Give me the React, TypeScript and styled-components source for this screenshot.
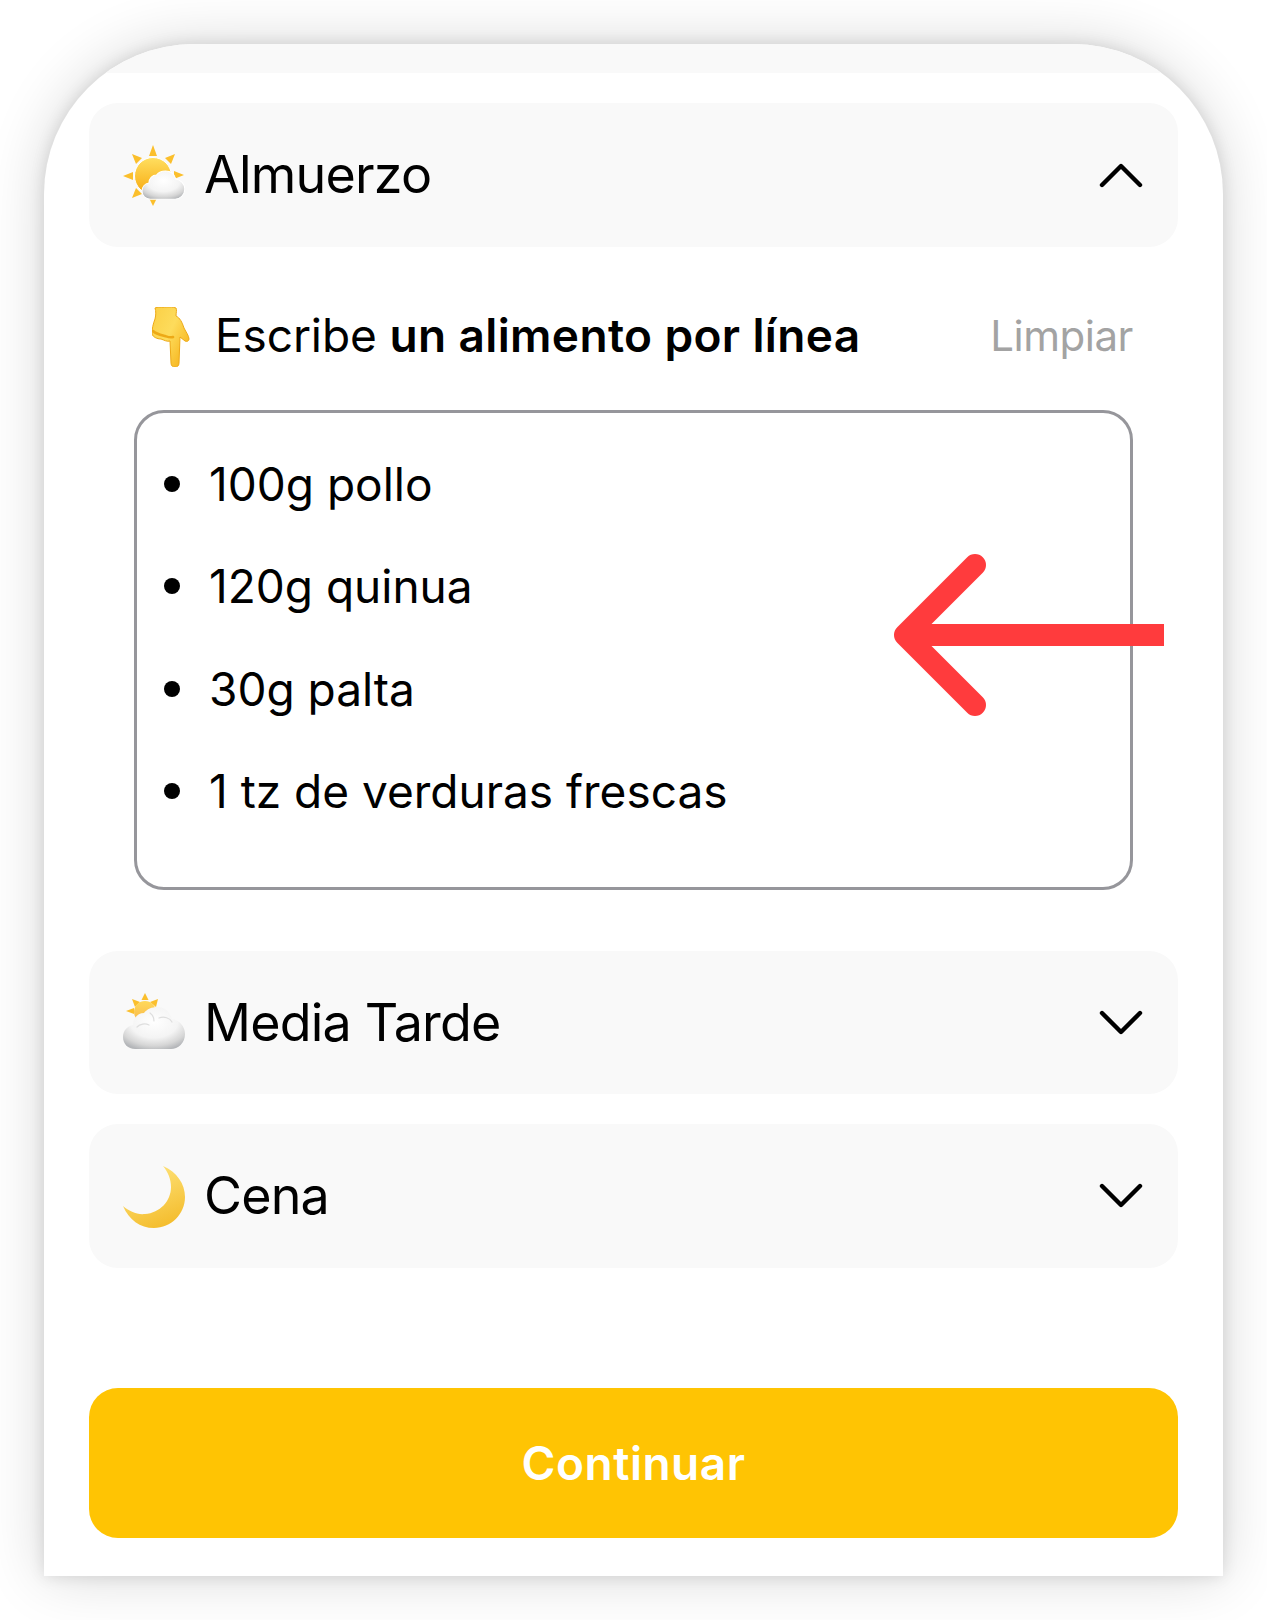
import React from 'react';
import styled, { createGlobalStyle } from 'styled-components';

const GlobalStyle = createGlobalStyle`
  html, body {
    margin: 0;
    padding: 0;
    background: #fff;
  }
  body {
    font-family: Inter, "Liberation Sans", sans-serif;
    color: #000;
  }
`;

const Page = styled.div`
  box-sizing: border-box;
  height: 1620px;
  padding: 44px 44px 44px;
  overflow: hidden;
`;

const Phone = styled.div`
  position: relative;
  box-sizing: border-box;
  width: 1179px;
  height: 1532px;
  background: #fff;
  border-radius: 150px 150px 0 0;
  box-shadow: 0 0 60px rgba(0, 0, 0, 0.16), 0 0 16px rgba(0, 0, 0, 0.12);
  overflow: hidden;
  display: flex;
  flex-direction: column;
`;

const TopStrip = styled.div`
  height: 29px;
  flex: none;
  background: #f9f9f9;
`;

const Content = styled.div`
  flex: 1;
  display: flex;
  flex-direction: column;
  padding: 30px 45px 38px;
`;

const MealRow = styled.div<{ $gapAfter?: number }>`
  box-sizing: border-box;
  height: 143.7px;
  flex: none;
  display: flex;
  align-items: center;
  gap: 19px;
  padding: 0 34px;
  border-radius: 29px;
  background: #f9f9f9;
  margin-bottom: ${(p) => p.$gapAfter ?? 0}px;
`;

const MealName = styled.span`
  flex: 1;
  font-size: 52px;
  font-weight: 400;
  letter-spacing: -0.8px;
  line-height: 60px;
`;

const Emoji = styled.svg`
  display: block;
  flex: none;
  width: 62px;
  height: 62px;
  margin-top: 3px;
`;

const Chevron = styled.svg`
  display: block;
  flex: none;
  width: 44px;
  height: 28px;
  margin-right: 1px;
  fill: none;
  stroke: #000;
  stroke-width: 4.4;
  stroke-linecap: round;
  stroke-linejoin: round;
`;

const Panel = styled.div`
  display: flex;
  flex-direction: column;
  padding: 56.5px 45px 61px 45px;
`;

const HintRow = styled.div`
  display: flex;
  align-items: center;
  padding-left: 18px;
  height: 64px;
`;

const HandIcon = styled.svg`
  display: block;
  flex: none;
  width: 38px;
  height: 60px;
  margin-top: 3px;
  margin-right: 25px;
`;

const HintText = styled.span`
  flex: 1;
  font-size: 46px;
  letter-spacing: -0.1px;
  font-weight: 400;

  b {
    font-weight: 600;
    letter-spacing: 0.36px;
  }
`;

const ClearLink = styled.span`
  font-size: 42px;
  color: #a3a3a3;
  letter-spacing: -0.45px;
`;

const FoodBox = styled.div`
  box-sizing: border-box;
  width: 999px;
  height: 480px;
  margin-top: 42.5px;
  border: 3px solid #96969b;
  border-radius: 30px;
  padding: 20px 27px 0;
  display: flex;
  flex-direction: column;
`;

const FoodItem = styled.div`
  height: 102.4px;
  flex: none;
  display: flex;
  align-items: center;
  font-size: 46px;
  letter-spacing: 0;
`;

const Bullet = styled.span`
  flex: none;
  width: 16px;
  height: 16px;
  border-radius: 50%;
  background: #000;
  margin-right: 29px;
`;

const Spacer = styled.div`
  flex: 1;
`;

const ContinueButton = styled.button`
  height: 150px;
  border: 0;
  border-radius: 29px;
  background: #ffc403;
  color: #fff;
  font-family: inherit;
  font-size: 46px;
  font-weight: 600;
  letter-spacing: 0.5px;
`;

const Arrow = styled.svg`
  position: absolute;
  left: 836px;
  top: 508px;
  width: 300px;
  height: 170px;
  fill: none;
  stroke: #ff3b3d;
  stroke-width: 22;
  stroke-linejoin: round;
  stroke-linecap: round;
`;

const cloudPath =
  'M12 42C5 42 0 37 0 30 0 24 4 19 10 18 10 11 15 6 21 6 24 2 29 0 34 0 42 0 47 5 49 12 56 13 62 19 62 27 62 36 55 42 48 42z';

const CloudDefs = ({ id }: { id: string }) => (
  <radialGradient id={id} cx="0.5" cy="0.35" r="0.7">
    <stop offset="0" stopColor="#ffffff" />
    <stop offset="0.55" stopColor="#f4f4f4" />
    <stop offset="0.82" stopColor="#d6d6d6" />
    <stop offset="1" stopColor="#b4b6b9" />
  </radialGradient>
);

const SunBehindCloud = () => (
  <Emoji viewBox="0 0 62 62">
    <defs>
      <linearGradient id="sun-a" x1="0" y1="0" x2="0" y2="1">
        <stop offset="0" stopColor="#ffdf60" />
        <stop offset="1" stopColor="#f7a90f" />
      </linearGradient>
      <CloudDefs id="cloud-a" />
    </defs>
    <g fill="#fbbf2c">
      <path d="M30 0l4 11h-8z" />
      <path d="M30 61l-4-8h8z" />
      <path d="M9 9l10 4-6 6z" />
      <path d="M52 9l-10 4 6 6z" />
      <path d="M0 31l10-4v8z" />
      <path d="M61 30l-10-4v8z" />
      <path d="M9 53l4-10 6 6z" />
    </g>
    <circle cx="30" cy="31" r="18.5" fill="url(#sun-a)" stroke="#fff" strokeWidth="1" />
    <path
      d={cloudPath}
      transform="translate(19 26) scale(0.69 0.67)"
      fill="url(#cloud-a)"
      stroke="#fff"
      strokeWidth="1.5"
    />
  </Emoji>
);

const CloudWithSun = () => (
  <Emoji viewBox="0 0 62 62">
    <defs>
      <linearGradient id="sun-b" x1="0" y1="0" x2="0" y2="1">
        <stop offset="0" stopColor="#ffd95a" />
        <stop offset="1" stopColor="#f8b64a" />
      </linearGradient>
      <CloudDefs id="cloud-b" />
    </defs>
    <g fill="#fbbf2c">
      <path d="M22 0l3.5 7h-7z" />
      <path d="M9 6l8 3-5 5z" />
      <path d="M35 6l-2 8-6-5z" />
      <path d="M3 18l8-3v6z" />
    </g>
    <circle cx="22" cy="19" r="11" fill="url(#sun-b)" />
    <path d={cloudPath} transform="translate(0 14)" fill="url(#cloud-b)" />
    <path
      d="M14 34c3-3 8-4 12-2M36 25c5-2 11 0 13 4M27 20c3 2 4 5 4 8"
      fill="none"
      stroke="#dedede"
      strokeWidth="1.2"
      strokeLinecap="round"
    />
  </Emoji>
);

const CrescentMoon = () => (
  <Emoji viewBox="0 0 62 62">
    <defs>
      <linearGradient id="moon" x1="0.2" y1="0" x2="0.6" y2="1">
        <stop offset="0" stopColor="#ffe680" />
        <stop offset="1" stopColor="#f4bd2e" />
      </linearGradient>
    </defs>
    <path
      d="M40 0c14 6 22 18 22 31 0 17-14 31-31 31C17 62 6 54 0 40c6 5 14 9 22 8 15-1 26-13 26-27 0-8-3-15-8-21z"
      fill="url(#moon)"
    />
  </Emoji>
);

const PointingHand = () => (
  <HandIcon viewBox="0 0 38 60">
    <defs>
      <linearGradient id="hand" x1="0" y1="0" x2="1" y2="0.8">
        <stop offset="0" stopColor="#fbcf45" />
        <stop offset="0.5" stopColor="#fddc5c" />
        <stop offset="1" stopColor="#f6b219" />
      </linearGradient>
    </defs>
    <path
      d="M3 1c4-2 9 0 12-1 3 0 6 0 9 1 1 2 0 5 0 8 4 2 6 6 8 12 2 4 5 8 5 11 0 2-2 3-4 2l-5-4-1 26c0 3-2 4-4 4s-4-1-4-4l-1-22c-3 1-6-1-9-2-4 0-8-2-9-5C0 22 1 17 3 12c1-4 1-8 0-11z"
      fill="url(#hand)"
      stroke="#eda916"
      strokeWidth="1"
    />
    <path
      d="M1 24c3 3 8 4 12 5 3 1 5 2 8 1"
      fill="none"
      stroke="#eda916"
      strokeWidth="2.5"
      strokeLinecap="round"
    />
  </HandIcon>
);

const meals = { afternoon: 'Media Tarde', dinner: 'Cena' };
const foods = ['100g pollo', '120g quinua', '30g palta', '1 tz de verduras frescas'];

export default function App() {
  return (
    <>
      <GlobalStyle />
      <Page>
        <Phone>
          <TopStrip />
          <Content>
            <MealRow>
              <SunBehindCloud />
              <MealName>Almuerzo</MealName>
              <Chevron viewBox="0 0 44 28">
                <path d="M3 24L22 5l19 19" />
              </Chevron>
            </MealRow>

            <Panel>
              <HintRow>
                <PointingHand />
                <HintText>
                  Escribe <b>un alimento por línea</b>
                </HintText>
                <ClearLink>Limpiar</ClearLink>
              </HintRow>
              <FoodBox>
                {foods.map((food) => (
                  <FoodItem key={food}>
                    <Bullet />
                    {food}
                  </FoodItem>
                ))}
              </FoodBox>
            </Panel>

            <MealRow $gapAfter={29.5}>
              <CloudWithSun />
              <MealName>{meals.afternoon}</MealName>
              <Chevron viewBox="0 0 44 28">
                <path d="M3 4l19 19L41 4" />
              </Chevron>
            </MealRow>
            <MealRow>
              <CrescentMoon />
              <MealName>{meals.dinner}</MealName>
              <Chevron viewBox="0 0 44 28">
                <path d="M3 4l19 19L41 4" />
              </Chevron>
            </MealRow>

            <Spacer />
            <ContinueButton>Continuar</ContinueButton>
          </Content>

          <Arrow viewBox="0 0 300 170">
            <path d="M95 13L25 83l70 70" />
            <path d="M25 83H284" strokeLinecap="butt" />
          </Arrow>
        </Phone>
      </Page>
    </>
  );
}
